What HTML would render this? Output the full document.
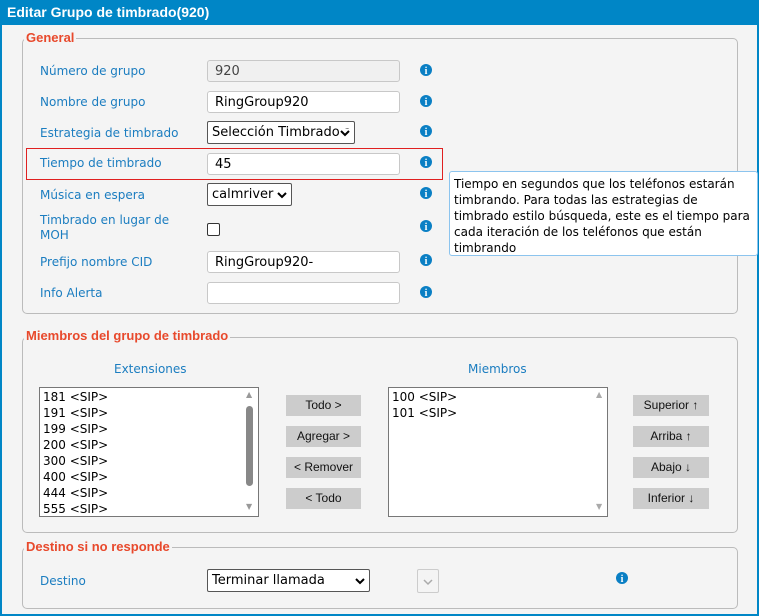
<!DOCTYPE html>
<html><head><meta charset="utf-8"><style>
*{box-sizing:border-box;margin:0;padding:0}
body{width:759px;height:616px;background:#f4f4f4;font-family:"DejaVu Sans","Liberation Sans",sans-serif;font-size:12px;position:relative;overflow:hidden}
.a{position:absolute}
.hdr{left:0;top:0;width:759px;height:25px;background:#0086c6;color:#fff;font-family:"Liberation Sans",sans-serif;font-weight:bold;font-size:14px;padding:4px 7px}
.frame{left:0;top:0;width:759px;height:616px;border:2px solid #0086c6;border-top:none}
.fs{border:1px solid #bbb;border-radius:5px}
.lg{background:#f4f4f4;color:#e8492c;font-weight:bold;font-family:"Liberation Sans",sans-serif;font-size:13px;padding:0 2px}
.lb{color:#1b7dc0;left:40px}
.in{background:#fff;border:1px solid #c8c8c8;border-radius:3px;height:22px;padding:3px 7px;font-size:13px;color:#000}
.sel{background:#fff;border:1px solid #555;border-radius:2px;height:23px;padding:3px 4px;font-size:13px;color:#000;overflow:hidden;white-space:nowrap}
.chev{position:absolute;right:3px;top:7px;background:#fff}
.btn{background:#cccccc;font-family:"Liberation Sans",sans-serif;font-size:12px;text-align:center;height:21px;line-height:21px;width:75px;color:#111}
.lst{background:#fff;border:1px solid #777;font-size:12px;line-height:16px;padding:1px 3px}
</style></head><body>
<div class="a hdr">Editar Grupo de timbrado(920)</div>
<div class="a frame"></div>

<div class="a fs" style="left:22px;top:38px;width:716px;height:276px"></div>
<div class="a lg" style="left:24px;top:30px">General</div>

<div class="a lb" style="top:64px">Número de grupo</div>
<div class="a in" style="left:207px;top:60px;width:193px;background:#f0f0f0;color:#444">920</div>
<div class="a lb" style="top:95px">Nombre de grupo</div>
<div class="a in" style="left:207px;top:91px;width:193px">RingGroup920</div>
<div class="a lb" style="top:126px">Estrategia de timbrado</div>
<div class="a sel" style="left:207px;top:121px;width:148px">Selección Timbrado a<svg class="chev" width="12" height="8" viewBox="0 0 12 8"><path d="M2 2l4 4 4-4" stroke="#000" stroke-width="2" fill="none"/></svg></div>
<div class="a" style="left:26px;top:148px;width:417px;height:32px;border:1px solid #e02020"></div>
<div class="a lb" style="top:156px">Tiempo de timbrado</div>
<div class="a in" style="left:207px;top:153px;width:193px">45</div>
<div class="a lb" style="top:188px">Música en espera</div>
<div class="a sel" style="left:207px;top:183px;width:85px">calmriver<svg class="chev" width="12" height="8" viewBox="0 0 12 8"><path d="M2 2l4 4 4-4" stroke="#000" stroke-width="2" fill="none"/></svg></div>
<div class="a lb" style="top:213px;line-height:15px">Timbrado en lugar de<br>MOH</div>
<div class="a" style="left:207px;top:223px;width:13px;height:13px;border:1px solid #333;border-radius:2px;background:#fff"></div>
<div class="a lb" style="top:255px">Prefijo nombre CID</div>
<div class="a in" style="left:207px;top:251px;width:193px">RingGroup920-</div>
<div class="a lb" style="top:286px">Info Alerta</div>
<div class="a in" style="left:207px;top:282px;width:193px"></div>

<svg class="a" style="left:0;top:0" width="759" height="616">
<defs><g id="i"><circle r="6" fill="#0a7fc4"/><text y="4" text-anchor="middle" fill="#fff" font-family="Liberation Serif" font-weight="bold" font-size="10">i</text></g></defs>
<use href="#i" x="426" y="70"/><use href="#i" x="426" y="101"/><use href="#i" x="426" y="131"/><use href="#i" x="426" y="162"/><use href="#i" x="426" y="193"/><use href="#i" x="426" y="226"/><use href="#i" x="426" y="260"/><use href="#i" x="426" y="292"/><use href="#i" x="622" y="578"/>
</svg>

<div class="a" style="left:449px;top:171px;width:309px;height:85px;background:#fff;border:1px solid #8cc4ee;border-radius:3px;padding:4px 4px;line-height:16px;color:#000">Tiempo en segundos que los teléfonos estarán timbrando. Para todas las estrategias de timbrado estilo búsqueda, este es el tiempo para cada iteración de los teléfonos que están timbrando</div>

<div class="a fs" style="left:22px;top:337px;width:716px;height:196px"></div>
<div class="a lg" style="left:24px;top:328px">Miembros del grupo de timbrado</div>
<div class="a" style="left:114px;top:362px;color:#1b7dc0">Extensiones</div>
<div class="a" style="left:468px;top:362px;color:#1b7dc0">Miembros</div>
<div class="a lst" style="left:39px;top:387px;width:220px;height:130px">181 &lt;SIP&gt;<br>191 &lt;SIP&gt;<br>199 &lt;SIP&gt;<br>200 &lt;SIP&gt;<br>300 &lt;SIP&gt;<br>400 &lt;SIP&gt;<br>444 &lt;SIP&gt;<br>555 &lt;SIP&gt;</div>
<div class="a" style="left:246px;top:406px;width:7px;height:80px;background:#888;border-radius:4px"></div>
<div class="a" style="left:246px;top:390px;color:#999;font-size:8px">▲</div>
<div class="a" style="left:246px;top:502px;color:#999;font-size:8px">▼</div>
<div class="a lst" style="left:388px;top:387px;width:220px;height:130px">100 &lt;SIP&gt;<br>101 &lt;SIP&gt;</div>
<div class="a" style="left:596px;top:390px;color:#aaa;font-size:8px">▲</div>
<div class="a" style="left:596px;top:502px;color:#aaa;font-size:8px">▼</div>
<div class="a btn" style="left:286px;top:395px">Todo &gt;</div>
<div class="a btn" style="left:286px;top:426px">Agregar &gt;</div>
<div class="a btn" style="left:286px;top:457px">&lt; Remover</div>
<div class="a btn" style="left:286px;top:488px">&lt; Todo</div>
<div class="a btn" style="left:633px;top:395px;width:76px">Superior ↑</div>
<div class="a btn" style="left:633px;top:426px;width:76px">Arriba ↑</div>
<div class="a btn" style="left:633px;top:457px;width:76px">Abajo ↓</div>
<div class="a btn" style="left:633px;top:488px;width:76px">Inferior ↓</div>

<div class="a fs" style="left:22px;top:547px;width:716px;height:62px"></div>
<div class="a lg" style="left:24px;top:539px">Destino si no responde</div>
<div class="a lb" style="top:574px">Destino</div>
<div class="a sel" style="left:207px;top:569px;width:163px">Terminar llamada<svg class="chev" width="12" height="8" viewBox="0 0 12 8"><path d="M2 2l4 4 4-4" stroke="#000" stroke-width="2" fill="none"/></svg></div>
<div class="a" style="left:417px;top:569px;width:22px;height:24px;border:1px solid #ccc;border-radius:2px;background:#f4f4f4"><svg style="position:absolute;left:4px;top:8px" width="12" height="8" viewBox="0 0 12 8"><path d="M2 2l4 4 4-4" stroke="#aaa" stroke-width="1.5" fill="none"/></svg></div>
</body></html>
